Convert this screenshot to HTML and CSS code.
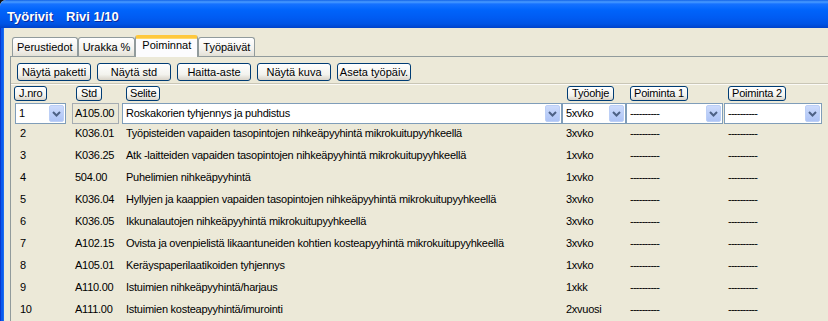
FILE: index.html
```html
<!DOCTYPE html>
<html lang="fi">
  <head>
    <meta charset="UTF-8" />
    <title>Työrivit</title>
    <link rel="stylesheet" href="styles.css">
  </head>
  <body>
    <div class="window">
      <div class="titlebar">
        <span>Työrivit</span>
        <span>Rivi 1/10</span>
      </div>

      <div class="client">
        <div class="tabstrip">
          <div class="tab">Perustiedot</div>
          <div class="tab">Urakka %</div>
          <div class="tab active">Poiminnat</div>
          <div class="tab">Työpäivät</div>
        </div>

        <div class="panel">
          <div class="toolbar">
            <button class="btn">Näytä paketti</button>
            <button class="btn">Näytä std</button>
            <button class="btn">Haitta-aste</button>
            <button class="btn">Näytä kuva</button>
            <button class="btn">Aseta työpäiv.</button>
          </div>
          <div class="rule"></div>

          <div class="grid head">
            <button class="hbtn c1">J.nro</button>
            <button class="hbtn c2">Std</button>
            <button class="hbtn c3">Selite</button>
            <button class="hbtn c4">Työohje</button>
            <button class="hbtn c5">Poiminta 1</button>
            <button class="hbtn c6">Poiminta 2</button>
          </div>

          <div class="grid edit">
            <div class="combo jnro"><span class="val">1</span><span class="arrow"><svg width="15" height="17" viewBox="0 0 15 17"><path d="M4 7l3.5 3.5L11 7" fill="none" stroke="#4d6185" stroke-width="2"/></svg></span></div>
            <div class="stdbox">A105.00</div>
            <div class="combo"><span class="val">Roskakorien tyhjennys ja puhdistus</span><span class="arrow"><svg width="15" height="17" viewBox="0 0 15 17"><path d="M4 7l3.5 3.5L11 7" fill="none" stroke="#4d6185" stroke-width="2"/></svg></span></div>
            <div class="combo"><span class="val">5xvko</span><span class="arrow"><svg width="15" height="17" viewBox="0 0 15 17"><path d="M4 7l3.5 3.5L11 7" fill="none" stroke="#4d6185" stroke-width="2"/></svg></span></div>
            <div class="combo p1"><span class="val dash">----------</span><span class="arrow"><svg width="15" height="17" viewBox="0 0 15 17"><path d="M4 7l3.5 3.5L11 7" fill="none" stroke="#4d6185" stroke-width="2"/></svg></span></div>
            <div class="combo"><span class="val dash">----------</span><span class="arrow"><svg width="15" height="17" viewBox="0 0 15 17"><path d="M4 7l3.5 3.5L11 7" fill="none" stroke="#4d6185" stroke-width="2"/></svg></span></div>
          </div>

          <div class="grid row">
            <span class="c1">2</span><span class="c2">K036.01</span>
            <span class="c3">Työpisteiden vapaiden tasopintojen nihkeäpyyhintä mikrokuitupyyhkeellä</span>
            <span class="c4">3xvko</span><span class="c5 dash">----------</span><span class="c6 dash">----------</span>
          </div>
          <div class="grid row">
            <span class="c1">3</span><span class="c2">K036.25</span>
            <span class="c3">Atk -laitteiden vapaiden tasopintojen nihkeäpyyhintä mikrokuitupyyhkeellä</span>
            <span class="c4">1xvko</span><span class="c5 dash">----------</span><span class="c6 dash">----------</span>
          </div>
          <div class="grid row">
            <span class="c1">4</span><span class="c2">504.00</span>
            <span class="c3">Puhelimien nihkeäpyyhintä</span>
            <span class="c4">1xvko</span><span class="c5 dash">----------</span><span class="c6 dash">----------</span>
          </div>
          <div class="grid row">
            <span class="c1">5</span><span class="c2">K036.04</span>
            <span class="c3">Hyllyjen ja kaappien vapaiden tasopintojen nihkeäpyyhintä mikrokuitupyyhkeellä</span>
            <span class="c4">3xvko</span><span class="c5 dash">----------</span><span class="c6 dash">----------</span>
          </div>
          <div class="grid row">
            <span class="c1">6</span><span class="c2">K036.05</span>
            <span class="c3">Ikkunalautojen nihkeäpyyhintä mikrokuitupyyhkeellä</span>
            <span class="c4">3xvko</span><span class="c5 dash">----------</span><span class="c6 dash">----------</span>
          </div>
          <div class="grid row">
            <span class="c1">7</span><span class="c2">A102.15</span>
            <span class="c3">Ovista ja ovenpielistä likaantuneiden kohtien kosteapyyhintä mikrokuitupyyhkeellä</span>
            <span class="c4">3xvko</span><span class="c5 dash">----------</span><span class="c6 dash">----------</span>
          </div>
          <div class="grid row">
            <span class="c1">8</span><span class="c2">A105.01</span>
            <span class="c3">Keräyspaperilaatikoiden tyhjennys</span>
            <span class="c4">1xvko</span><span class="c5 dash">----------</span><span class="c6 dash">----------</span>
          </div>
          <div class="grid row">
            <span class="c1">9</span><span class="c2">A110.00</span>
            <span class="c3">Istuimien nihkeäpyyhintä/harjaus</span>
            <span class="c4">1xkk</span><span class="c5 dash">----------</span><span class="c6 dash">----------</span>
          </div>
          <div class="grid row">
            <span class="c1">10</span><span class="c2">A111.00</span>
            <span class="c3">Istuimien kosteapyyhintä/imurointi</span>
            <span class="c4">2xvuosi</span><span class="c5 dash">----------</span><span class="c6 dash">----------</span>
          </div>
        </div>
      </div>
    </div>
  </body>
</html>
```

FILE: styles.css
```css
* {
  box-sizing: border-box;
}

body {
  background: #111;
  color: #000;
  font-family: "Liberation Sans", Arial, sans-serif;
  font-size: 11px;
  margin: 0;
  overflow: hidden;
}

.window {
  background: #ece9d8;
  border-top-left-radius: 6px;
  height: 321px;
  overflow: hidden;
  width: 840px;
}

.titlebar {
  align-items: center;
  background: linear-gradient(
    to bottom,
    #1263e8 0,
    #4a9cff 2px,
    #1672ff 4px,
    #0064fb 10px,
    #005bf2 18px,
    #0053e4 24px,
    #0042c9 28px
  );
  color: #fff;
  display: flex;
  font-size: 13px;
  font-weight: bold;
  gap: 13px;
  height: 28px;
  padding: 4px 0 0 7px;
  text-shadow: 1px 1px 0 #0c2a9a;
}

.client {
  background: linear-gradient(
    to right,
    #0838cf 0 1px,
    #0a5aee 1px 3px,
    #1b6cf0 3px 4px,
    #ece9d8 4px
  );
  height: 293px;
  padding-left: 10px;
}

.tabstrip {
  align-items: flex-end;
  display: flex;
  height: 28px;
  padding-left: 2px;
}

.tab {
  background: linear-gradient(#ffffff, #f4f3ef 60%, #e3e1d6);
  border: 1px solid #919b9c;
  border-bottom: none;
  border-radius: 3px 3px 0 0;
  height: 19px;
  line-height: 18px;
  padding: 0 4px;
  white-space: nowrap;
}

.tab.active {
  background: #fcfcfe;
  border-top: 3px solid #ffc83c;
  box-shadow: inset 0 1px 0 #ffd86a;
  height: 22px;
  line-height: 14px;
  margin-bottom: -1px;
  padding: 0 6px;
  position: relative;
  z-index: 1;
}

.panel {
  border-left: 1px solid #919b9c;
  border-top: 1px solid #919b9c;
  height: 265px;
  padding-top: 6px;
}

.toolbar {
  display: flex;
  gap: 6px;
  padding-left: 6px;
}

.btn,
.hbtn {
  background: linear-gradient(#ffffff, #f3f3ee 65%, #d8d3c8);
  border: 1px solid #003c74;
  border-radius: 3px;
  color: #000;
  font-family: inherit;
  font-size: 11px;
  margin: 0;
  padding: 0;
  white-space: nowrap;
}

.btn {
  height: 18px;
  line-height: 16px;
  width: 74px;
}

.rule {
  border-bottom: 1px solid #fbfaf6;
  border-top: 1px solid #c9c6b6;
  margin-top: 2px;
}

.grid {
  display: grid;
  grid-template-columns: 61px 50px 440px 64px 98px 98px;
}

.head {
  height: 15px;
  margin-top: 1px;
}

.hbtn {
  height: 15px;
  justify-self: start;
  letter-spacing: -0.2px;
  line-height: 13px;
  padding: 0 3px;
}

.hbtn.c1 { margin-left: 3px; padding: 0 4px; }
.hbtn.c2 { margin-left: 4px; padding: 0 4px; }
.hbtn.c3 { margin-left: 4px; }
.hbtn.c4 { margin-left: 5px; padding: 0 4px; }
.hbtn.c5 { margin-left: 4px; }
.hbtn.c6 { margin-left: 4px; }

.edit {
  height: 21px;
  margin-top: 2px;
}

.combo {
  align-items: center;
  background: #fff;
  border: 1px solid #7f9db9;
  display: flex;
  height: 21px;
  line-height: 19px;
  padding: 0 1px 0 3px;
}

.combo.jnro {
  margin-left: 4px;
  width: 51px;
}

.combo.p1 {
  width: 97px;
}

.val {
  flex: 1;
  letter-spacing: -0.25px;
  overflow: hidden;
  white-space: nowrap;
}

.arrow {
  background: linear-gradient(#cddbfc, #b9cdf8 60%, #aec4f5);
  border: 1px solid #bccff6;
  border-radius: 2px;
  display: block;
  height: 17px;
  width: 15px;
}

.arrow svg {
  display: block;
  margin: -1px;
}

.stdbox {
  border: 1px solid #a5acb2;
  height: 21px;
  letter-spacing: -0.25px;
  line-height: 19px;
  padding-left: 2px;
  width: 47px;
}

.row {
  height: 22px;
  letter-spacing: -0.25px;
  line-height: 18px;
  white-space: nowrap;
}

.row .c1 { padding-left: 9px; }
.row .c2 { padding-left: 3px; }
.row .c3 { padding-left: 4px; }
.row .c4 { padding-left: 4px; }
.row .c5 { padding-left: 4px; }
.row .c6 { padding-left: 4px; }

.dash,
.row .dash {
  letter-spacing: -0.75px;
}
```
